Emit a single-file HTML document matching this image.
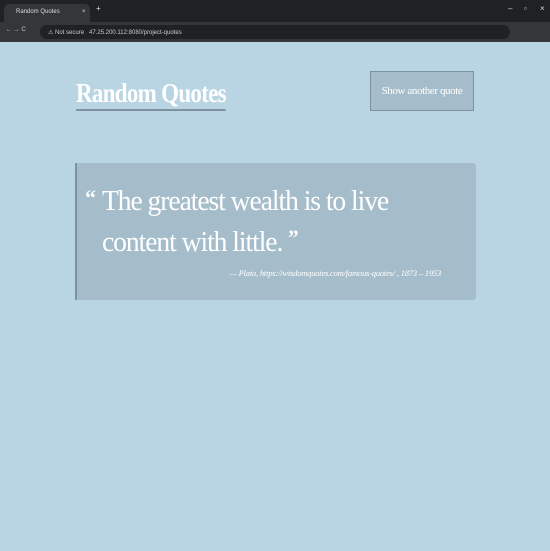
<!DOCTYPE html>
<html><head><style>
*{margin:0;padding:0;box-sizing:border-box}
body{width:550px;height:551px;background:#b9d4e2;font-family:"Liberation Serif",serif;position:relative;overflow:hidden}
.tabs{position:absolute;left:0;top:0;width:550px;height:22px;background:#202124}
.tab{position:absolute;left:4px;top:4px;width:86px;height:18px;background:#35363a;border-radius:5px 5px 0 0;color:#ddd;font:6px "Liberation Sans",sans-serif;padding:5px 0 0 12px}
.addr{position:absolute;left:0;top:22px;width:550px;height:20px;background:#35363a;color:#ccc;font:6px "Liberation Sans",sans-serif}
.url{position:absolute;left:40px;top:3px;width:470px;height:14px;background:#202124;border-radius:7px;padding:4px 0 0 8px}
.wc{position:absolute;top:4px;color:#ddd;font:8px "Liberation Sans",sans-serif}
h1{position:absolute;left:76px;top:78px;font-size:27px;font-weight:bold;color:#fff;letter-spacing:-0.8px;border-bottom:2px solid #7d929e;line-height:30px;padding-bottom:1px;white-space:nowrap;transform-origin:left;transform:scaleX(0.85)}
.btn{position:absolute;left:370px;top:71px;width:104px;height:40px;background:#a5bdca;border:1px solid #7d929e;color:#fff;font-size:11px;text-align:center;line-height:38px;letter-spacing:-0.4px}
.box{position:absolute;left:75px;top:163px;width:401px;height:137px;background:#a5bdca;border-left:2px solid #7d929e;border-radius:0 3px 3px 0}
.q{position:absolute;left:25px;top:18px;color:#fff;font-size:29px;line-height:40px;letter-spacing:-1.1px;transform-origin:left top;transform:scaleX(0.95);width:360px}
.oq{position:absolute;left:8px;top:22px;color:#fff;font-size:22px;font-weight:bold}
.cq{font-size:22px;font-weight:bold;vertical-align:6px}
.at{position:absolute;right:35px;top:105px;color:#fff;font-size:8.5px;font-style:italic;letter-spacing:-0.2px}
</style></head><body>
<div class="tabs"><div class="tab">Random Quotes <span style="position:absolute;left:78px">×</span></div><span class="wc" style="left:96px">+</span><span class="wc" style="left:508px">–</span><span class="wc" style="left:524px">▫</span><span class="wc" style="left:540px">×</span></div>
<div class="addr"><span style="position:absolute;left:6px;top:5px">← → C</span><div class="url">⚠ Not secure &nbsp; 47.25.200.112:8080/project-quotes</div></div>
<h1>Random Quotes</h1>
<div class="btn">Show another quote</div>
<div class="box"><span class="oq">“</span><div class="q">The greatest wealth is to live<br><span style="position:relative;top:-3px">content with little. <span class="cq">”</span></span></div>
<div class="at">— Plato, https://wisdomquotes.com/famous-quotes/ , 1873 – 1953</div></div>
</body></html>
